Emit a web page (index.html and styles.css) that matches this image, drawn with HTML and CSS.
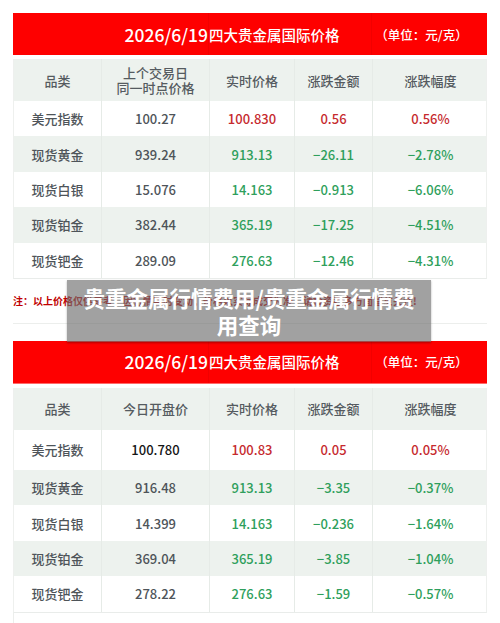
FILE: index.html
```html
<!DOCTYPE html>
<html lang="zh-CN">
<head>
    <meta charset="UTF-8">
    <meta name="viewport" content="width=device-width, initial-scale=1.0">
    <title>贵重金属行情费用</title>
    <link rel="stylesheet" href="styles.css">
</head>
<body>
    <div class="page">
        <section class="board">
            <div class="board__head">
                <div class="board__date">2026/6/19</div>
                <div class="board__name">四大贵金属国际价格</div>
                <div class="board__unit">（单位：元/克）</div>
            </div>
            <div class="prices">
                <div class="prices__row prices__row_head">
                    <div class="prices__cell">品类</div>
                    <div class="prices__cell prices__cell_two">上个交易日<br>同一时点价格</div>
                    <div class="prices__cell">实时价格</div>
                    <div class="prices__cell">涨跌金额</div>
                    <div class="prices__cell">涨跌幅度</div>
                </div>
                <div class="prices__row">
                    <div class="prices__cell">美元指数</div>
                    <div class="prices__cell">100.27</div>
                    <div class="prices__cell up">100.830</div>
                    <div class="prices__cell up">0.56</div>
                    <div class="prices__cell up">0.56%</div>
                </div>
                <div class="prices__row prices__row_alt">
                    <div class="prices__cell">现货黄金</div>
                    <div class="prices__cell">939.24</div>
                    <div class="prices__cell down">913.13</div>
                    <div class="prices__cell down">−26.11</div>
                    <div class="prices__cell down">−2.78%</div>
                </div>
                <div class="prices__row">
                    <div class="prices__cell">现货白银</div>
                    <div class="prices__cell">15.076</div>
                    <div class="prices__cell down">14.163</div>
                    <div class="prices__cell down">−0.913</div>
                    <div class="prices__cell down">−6.06%</div>
                </div>
                <div class="prices__row prices__row_alt">
                    <div class="prices__cell">现货铂金</div>
                    <div class="prices__cell">382.44</div>
                    <div class="prices__cell down">365.19</div>
                    <div class="prices__cell down">−17.25</div>
                    <div class="prices__cell down">−4.51%</div>
                </div>
                <div class="prices__row">
                    <div class="prices__cell">现货钯金</div>
                    <div class="prices__cell">289.09</div>
                    <div class="prices__cell down">276.63</div>
                    <div class="prices__cell down">−12.46</div>
                    <div class="prices__cell down">−4.31%</div>
                </div>
            </div>
        </section>

        <p class="note">注：以上价格仅供参考，因行情实时变动，价格以实际成交为准，请投资者多方面留意关注!</p>

        <section class="board board_second">
            <div class="board__head">
                <div class="board__date">2026/6/19</div>
                <div class="board__name">四大贵金属国际价格</div>
                <div class="board__unit">（单位：元/克）</div>
            </div>
            <div class="prices">
                <div class="prices__row prices__row_head">
                    <div class="prices__cell">品类</div>
                    <div class="prices__cell">今日开盘价</div>
                    <div class="prices__cell">实时价格</div>
                    <div class="prices__cell">涨跌金额</div>
                    <div class="prices__cell">涨跌幅度</div>
                </div>
                <div class="prices__row prices__row_tall">
                    <div class="prices__cell">美元指数</div>
                    <div class="prices__cell prices__cell_dark">100.780</div>
                    <div class="prices__cell up">100.83</div>
                    <div class="prices__cell up">0.05</div>
                    <div class="prices__cell up">0.05%</div>
                </div>
                <div class="prices__row prices__row_alt">
                    <div class="prices__cell">现货黄金</div>
                    <div class="prices__cell">916.48</div>
                    <div class="prices__cell down">913.13</div>
                    <div class="prices__cell down">−3.35</div>
                    <div class="prices__cell down">−0.37%</div>
                </div>
                <div class="prices__row">
                    <div class="prices__cell">现货白银</div>
                    <div class="prices__cell">14.399</div>
                    <div class="prices__cell down">14.163</div>
                    <div class="prices__cell down">−0.236</div>
                    <div class="prices__cell down">−1.64%</div>
                </div>
                <div class="prices__row prices__row_alt">
                    <div class="prices__cell">现货铂金</div>
                    <div class="prices__cell">369.04</div>
                    <div class="prices__cell down">365.19</div>
                    <div class="prices__cell down">−3.85</div>
                    <div class="prices__cell down">−1.04%</div>
                </div>
                <div class="prices__row">
                    <div class="prices__cell">现货钯金</div>
                    <div class="prices__cell">278.22</div>
                    <div class="prices__cell down">276.63</div>
                    <div class="prices__cell down">−1.59</div>
                    <div class="prices__cell down">−0.57%</div>
                </div>
            </div>
        </section>

        <div class="note note_empty"></div>

        <div class="banner">贵重金属行情费用/贵重金属行情费用查询</div>
    </div>
</body>
</html>
```

FILE: styles.css
```css
body {
    margin: 0;
    background-color: #ffffff;
    font-family: "Noto Sans CJK SC", "Noto Sans", sans-serif;
    color: #4e5459;
}

.page {
    position: relative;
    width: 474px;
    height: 623px;
    padding: 13px 13px 0 13px;
    overflow: hidden;
}

.board__head {
    display: grid;
    grid-template-columns: 196px 163px 115px;
    height: 42px;
    background-color: #fe0000;
    color: #ffffff;
    margin-bottom: 4px;
    font-weight: 500;
}

.board_second .board__head {
    height: 43px;
    border-bottom: 1px solid #ff6a6a;
    box-sizing: border-box;
}

.board__date,
.board__name,
.board__unit {
    display: flex;
    align-items: center;
    border-right: 1px solid rgba(150, 0, 0, 0.12);
}

.board__date {
    justify-content: flex-end;
    font-size: 17.5px;
}

.board__name {
    font-size: 14.5px;
}

.board__unit {
    justify-content: center;
    padding-right: 16px;
    font-size: 12.5px;
    border-right: none;
}

.prices {
    border-left: 1px solid #eef0ee;
    border-right: 1px solid #eef0ee;
    border-bottom: 1px solid #e9ecea;
}

.prices__row {
    display: grid;
    grid-template-columns: 88px 108px 85px 78px 115px;
    height: 35.4px;
    font-size: 13px;
    font-weight: 500;
}

.prices__row_head {
    height: 42px;
    background-color: #edf2ee;
    color: #555b60;
}

.prices__row_alt {
    background-color: #edf2ee;
}

.prices__row_tall {
    height: 40px;
}

.prices__cell {
    display: flex;
    align-items: center;
    justify-content: center;
    text-align: center;
    border-right: 1px solid #e6ebe7;
}

.prices__cell:last-child {
    border-right: none;
}

.prices__cell_two {
    line-height: 15px;
}

.prices__cell_dark {
    color: #151515;
}

.up {
    color: #c62a2e;
}

.down {
    color: #2f9f5c;
}

.note {
    margin: 0 0 17px 0;
    height: 44px;
    display: flex;
    align-items: center;
    font-size: 10px;
    font-weight: bold;
    color: #c00000;
    border-bottom: 1px solid #eceeec;
}

.note_empty {
    margin: 0;
    border-left: 1px solid #eceeec;
    border-bottom: none;
}

.banner {
    position: absolute;
    left: 67px;
    top: 280px;
    width: 364px;
    box-sizing: border-box;
    padding: 4px 12px;
    background-color: rgba(110, 110, 110, 0.65);
    box-shadow: 0 1px 2px rgba(0, 0, 0, 0.3);
    color: #ffffff;
    font-size: 21.5px;
    font-weight: bold;
    line-height: 27px;
    text-align: center;
}
```
